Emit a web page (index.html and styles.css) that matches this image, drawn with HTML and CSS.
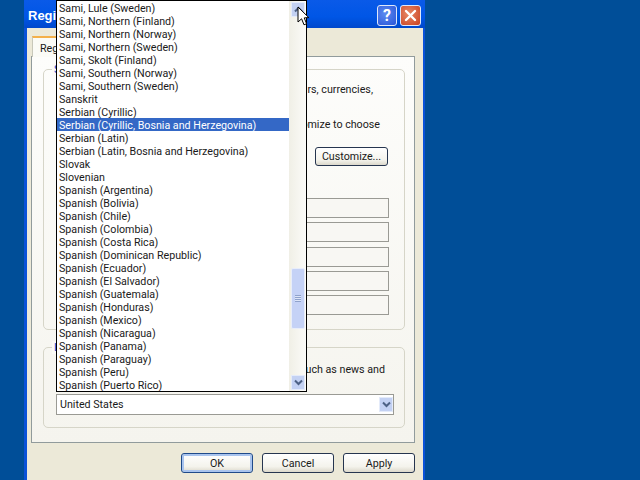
FILE: index.html
```html
<!DOCTYPE html>
<html lang="en">
<head>
<meta charset="utf-8">
<title>Regional and Language Options</title>
<link rel="stylesheet" href="styles.css">
</head>
<body>
<div class="window">
  <header class="titlebar">
    <span class="title">Regi</span>
    <span class="caption-btn help">?</span>
    <span class="caption-btn close">
      <svg width="13" height="13" viewBox="0 0 13 13"><path d="M2 2 L11 11 M11 2 L2 11" stroke="#fff" stroke-width="2.4" stroke-linecap="round"/></svg>
    </span>
  </header>
  <div class="client">
    <div class="tabs"><span class="tab">Reg</span></div>
    <div class="panel">
      <section class="group group-standards">
        <span class="legend">S</span>
        <p class="note note-top">rs, currencies,</p>
        <p class="note note-mid">omize to choose</p>
        <div class="customize-row"><button class="btn btn-customize">Customize...</button></div>
        <div class="samples">
          <span class="field"></span>
          <span class="field"></span>
          <span class="field"></span>
          <span class="field"></span>
          <span class="field"></span>
        </div>
      </section>
      <section class="group group-location">
        <span class="legend">L</span>
        <p class="note note-loc">uch as news and</p>
        <div class="combo">
          <span class="combo-text">United States</span>
          <span class="arrow-btn combo-arrow">
            <svg width="9" height="7" viewBox="0 0 9 7"><path d="M1 1.5 L4.5 5 L8 1.5" fill="none" stroke="#4d6185" stroke-width="2"/></svg>
          </span>
        </div>
      </section>
    </div>
    <div class="actions">
      <button class="btn btn-default">OK</button>
      <button class="btn">Cancel</button>
      <button class="btn">Apply</button>
    </div>
  </div>
</div>

<div class="dropdown">
  <ul class="options">
    <li>Sami, Lule (Sweden)</li>
    <li>Sami, Northern (Finland)</li>
    <li>Sami, Northern (Norway)</li>
    <li>Sami, Northern (Sweden)</li>
    <li>Sami, Skolt (Finland)</li>
    <li>Sami, Southern (Norway)</li>
    <li>Sami, Southern (Sweden)</li>
    <li>Sanskrit</li>
    <li>Serbian (Cyrillic)</li>
    <li class="selected">Serbian (Cyrillic, Bosnia and Herzegovina)</li>
    <li>Serbian (Latin)</li>
    <li>Serbian (Latin, Bosnia and Herzegovina)</li>
    <li>Slovak</li>
    <li>Slovenian</li>
    <li>Spanish (Argentina)</li>
    <li>Spanish (Bolivia)</li>
    <li>Spanish (Chile)</li>
    <li>Spanish (Colombia)</li>
    <li>Spanish (Costa Rica)</li>
    <li>Spanish (Dominican Republic)</li>
    <li>Spanish (Ecuador)</li>
    <li>Spanish (El Salvador)</li>
    <li>Spanish (Guatemala)</li>
    <li>Spanish (Honduras)</li>
    <li>Spanish (Mexico)</li>
    <li>Spanish (Nicaragua)</li>
    <li>Spanish (Panama)</li>
    <li>Spanish (Paraguay)</li>
    <li>Spanish (Peru)</li>
    <li>Spanish (Puerto Rico)</li>
  </ul>
  <div class="scrollbar">
    <span class="arrow-btn">
      <svg width="9" height="7" viewBox="0 0 9 7"><path d="M1 5.5 L4.5 2 L8 5.5" fill="none" stroke="#4d6185" stroke-width="2"/></svg>
    </span>
    <div class="track">
      <div class="thumb"><span class="grip"></span></div>
    </div>
    <span class="arrow-btn">
      <svg width="9" height="7" viewBox="0 0 9 7"><path d="M1 1.5 L4.5 5 L8 1.5" fill="none" stroke="#4d6185" stroke-width="2"/></svg>
    </span>
  </div>
</div>

<svg class="cursor" width="13" height="21" viewBox="0 0 13 21"><path d="M1 1 L1 16 L4.6 12.8 L7 18.8 L9.6 17.7 L7.2 11.9 L11.8 11.6 Z" fill="#fff" stroke="#000" stroke-width="1"/></svg>
</body>
</html>
```
FILE: styles.css
```css
* { box-sizing: border-box; }
html, body { margin: 0; height: 100%; }
body {
  width: 640px;
  height: 480px;
  overflow: hidden;
  position: relative;
  background: #004e98;
  font-family: Roboto, "Liberation Sans", Arial, sans-serif;
  font-size: 10.7px;
  color: #1a1a1a;
}
.window {
  position: absolute;
  left: 24px;
  top: 0;
  width: 401px;
  height: 480px;
  display: flex;
  flex-direction: column;
  background: #0a52d8;
  padding: 0 2px 0 3px;
  overflow: hidden;
}
.titlebar {
  height: 28px;
  margin: 0 -2px 0 -3px;
  padding: 5px 4px 0 4px;
  flex: none;
  display: flex;
  align-items: flex-start;
  gap: 3px;
  background: linear-gradient(#0a5ae8, #0056e6 60%, #0048cc);
}
.title {
  flex: 1;
  color: #fff;
  font-family: "Liberation Sans", Arial, sans-serif;
  font-weight: 700;
  font-size: 13px;
  line-height: 21px;
  white-space: nowrap;
}
.caption-btn {
  width: 20px;
  height: 21px;
  border: 1px solid #dfe8fb;
  border-radius: 3px;
  display: flex;
  align-items: center;
  justify-content: center;
  color: #fff;
  font-weight: 700;
  font-size: 16px;
}
.help { background: radial-gradient(circle at 40% 40%, #5c8bf0, #2a55d8); }
.close { background: radial-gradient(circle at 40% 40%, #e88a68, #c9401f); width: 21px; }
.client {
  flex: 1;
  min-height: 0;
  background: #ece9d8;
  padding: 8px 8px 0 4px;
  display: flex;
  flex-direction: column;
}
.tabs { height: 20px; flex: none; padding-left: 1px; }
.tab {
  display: block;
  width: 60px;
  height: 21px;
  padding: 4px 0 0 7px;
  background: #fbfbf6;
  border-top: 2px solid #f4b04a;
  border-left: 1px solid #c8c8ba;
  white-space: nowrap;
  position: relative;
}
.panel {
  height: 387px;
  flex: none;
  border: 1px solid #919b9c;
  background: linear-gradient(#fdfdfb, #f5f4ee);
  padding: 12px 9px 0 11px;
  display: flex;
  flex-direction: column;
  gap: 17px;
}
.group {
  position: relative;
  flex: none;
  border: 1px solid #d6d5c8;
  border-radius: 5px;
  padding: 0 0 0 12px;
}
.group-standards { height: 261px; padding-top: 13px; }
.group-location { height: 81px; padding-top: 15px; }
.legend {
  position: absolute;
  left: 8px;
  top: -7px;
  padding: 0 2px;
  line-height: 13px;
  color: #1f46c8;
  background: #fbfbf7;
  white-space: nowrap;
}
.note { margin: 0; line-height: 13px; text-align: right; white-space: nowrap; }
.note-top { padding-right: 31px; }
.note-mid { margin-top: 22px; padding-right: 24px; }
.note-loc { padding-right: 19px; }
.customize-row { display: flex; justify-content: flex-end; padding-right: 16px; margin-top: 16px; }
.samples {
  display: flex;
  flex-direction: column;
  align-items: flex-end;
  margin-top: 32px;
  gap: 4.25px;
  padding-right: 15px;
}
.field {
  display: block;
  width: 250px;
  height: 20px;
  border: 1px solid #9a9a94;
  background: #f8f7f3;
}
.btn {
  font: inherit;
  color: #1a1a1a;
  height: 20px;
  width: 72px;
  padding: 0;
  border: 1px solid #26354f;
  border-radius: 3px;
  background: linear-gradient(#fff, #f4f3ec 70%, #dcd8cb);
}
.btn-customize { width: 73px; height: 19px; }
.btn-default {
  border-color: #1f4a8a;
  box-shadow: inset 0 0 0 2px #a9c4ee;
}
.actions {
  flex: none;
  display: flex;
  justify-content: flex-end;
  gap: 9px;
  margin-top: 10px;
}
.combo {
  margin-top: 18px;
  margin-right: 10px;
  height: 21px;
  border: 1px solid #9a9a94;
  background: #fff;
  display: flex;
  align-items: center;
  justify-content: space-between;
  padding: 0 0 0 3px;
}
.combo-arrow { height: 19px; width: 16px; }
.arrow-btn {
  flex: none;
  width: 14px;
  height: 15px;
  display: flex;
  align-items: center;
  justify-content: center;
  background: #c3d1f3;
  border: 1px solid #e4ebfa;
}
.dropdown {
  position: absolute;
  left: 56px;
  top: 0;
  width: 251px;
  height: 392px;
  background: #fff;
  border: 1px solid #000;
  display: flex;
}
.options {
  list-style: none;
  margin: 0;
  padding: 0;
  flex: 1;
  min-width: 0;
}
.options li {
  height: 13px;
  line-height: 15px;
  padding-left: 2px;
  white-space: nowrap;
}
.options .selected { background: #3468c6; color: #fff; }
.scrollbar {
  flex: none;
  width: 17px;
  padding: 1px 1px 1px 2px;
  display: flex;
  flex-direction: column;
  background: linear-gradient(90deg, #f0efe6, #fbfbf8);
}
.track {
  flex: 1;
  display: flex;
  flex-direction: column;
  justify-content: flex-end;
  padding-bottom: 46px;
}
.thumb {
  height: 61px;
  width: 14px;
  background: #c5d2f6;
  border: 1px solid #e8edfa;
  border-radius: 2px;
  display: flex;
  align-items: center;
  justify-content: center;
}
.grip {
  width: 6px;
  height: 7px;
  background: repeating-linear-gradient(#8fa2cc 0 1px, #dde5f8 1px 2px);
}
.cursor { position: absolute; left: 297px; top: 6px; }
```
